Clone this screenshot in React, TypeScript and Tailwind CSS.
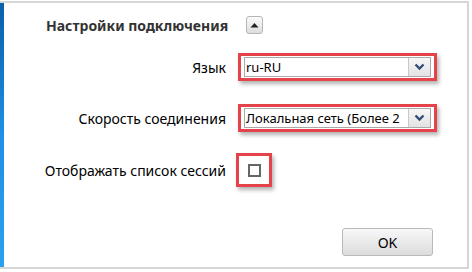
import React from 'react';

const font = { fontFamily: '"Noto Sans", "Open Sans", sans-serif' };

function RedFrame({ children, className = '' }: { children: React.ReactNode; className?: string }) {
    return (
        <div className={`border-[3px] border-[#e5434b] shadow-[2px_3px_4px_rgba(0,0,0,0.3)] ${className}`}>
            {children}
        </div>
    );
}

function Select({ value }: { value: string }) {
    return (
        <RedFrame className="w-[199px] h-[28px] px-[3px] py-[1px]">
            <div className="flex h-full border border-[#a9a9a9] bg-white">
                <div className="flex-1 flex items-center overflow-hidden whitespace-nowrap pl-[1px] text-[13px] leading-none text-black">
                    {value}
                </div>
                <div className="w-[22px] flex items-center justify-center border-l border-[#c8c8c8] bg-gradient-to-b from-[#f7f7f7] to-[#e3e3e3]">
                    <svg width="11" height="8" viewBox="0 0 11 8">
                        <path d="M1.5 1.5 L5.5 5.5 L9.5 1.5" fill="none" stroke="#2e4f7a" strokeWidth="2.4" />
                    </svg>
                </div>
            </div>
        </RedFrame>
    );
}

export default function App() {
    return (
        <div className="w-[472px] h-[272px] bg-white pt-[1px]" style={font}>
            <div className="flex w-[469px] h-[268px] border-t-2 border-r-2 border-b-2 border-[#d6d6d6]">
                {/* левая синяя полоса */}
                <div className="w-[4px] bg-gradient-to-b from-[#0b5fa8] via-[#1e90e6] to-[#2aa0f0]" />

                <div className="flex-1 flex flex-col">
                    {/* заголовок */}
                    <div className="flex items-center h-[32px] mt-[6px] pl-[42px]">
                        <span className="text-[14px] font-bold text-[#333]">Настройки подключения</span>
                        <div className="ml-[18px] w-[17px] h-[18px] rounded-[3px] border border-[#b5b5b5] bg-gradient-to-b from-[#fbfbfb] to-[#dedede] flex items-center justify-center">
                            <svg width="9" height="6" viewBox="0 0 9 6">
                                <path d="M0.5 5.5 L4.5 1 L8.5 5.5 Z" fill="#222" />
                            </svg>
                        </div>
                    </div>

                    <div className="grid grid-cols-[222px_1fr] gap-x-[12px] items-center mt-[12px]">
                        <div className="text-right text-[14px] text-black">Язык</div>
                        <Select value="ru-RU" />
                    </div>

                    <div className="grid grid-cols-[222px_1fr] gap-x-[12px] items-center mt-[23px]">
                        <div className="text-right text-[14px] text-black">Скорость соединения</div>
                        <Select value="Локальная сеть (Более 2" />
                    </div>

                    <div className="grid grid-cols-[222px_1fr] gap-x-[10px] items-center mt-[21px]">
                        <div className="text-right text-[14px] text-black">Отображать список сессий</div>
                        <RedFrame className="w-[36px] h-[34px] flex items-center justify-center">
                            <div className="w-[13px] h-[13px] border-2 border-[#666] bg-white" />
                        </RedFrame>
                    </div>

                    <div className="flex justify-end mt-[41px] pr-[34px]">
                        <button className="w-[91px] h-[28px] rounded-[3px] border border-[#b9b9b9] bg-gradient-to-b from-[#f8f8f8] to-[#dcdcdc] text-[14px] text-black">
                            OK
                        </button>
                    </div>
                </div>
            </div>
        </div>
    );
}
